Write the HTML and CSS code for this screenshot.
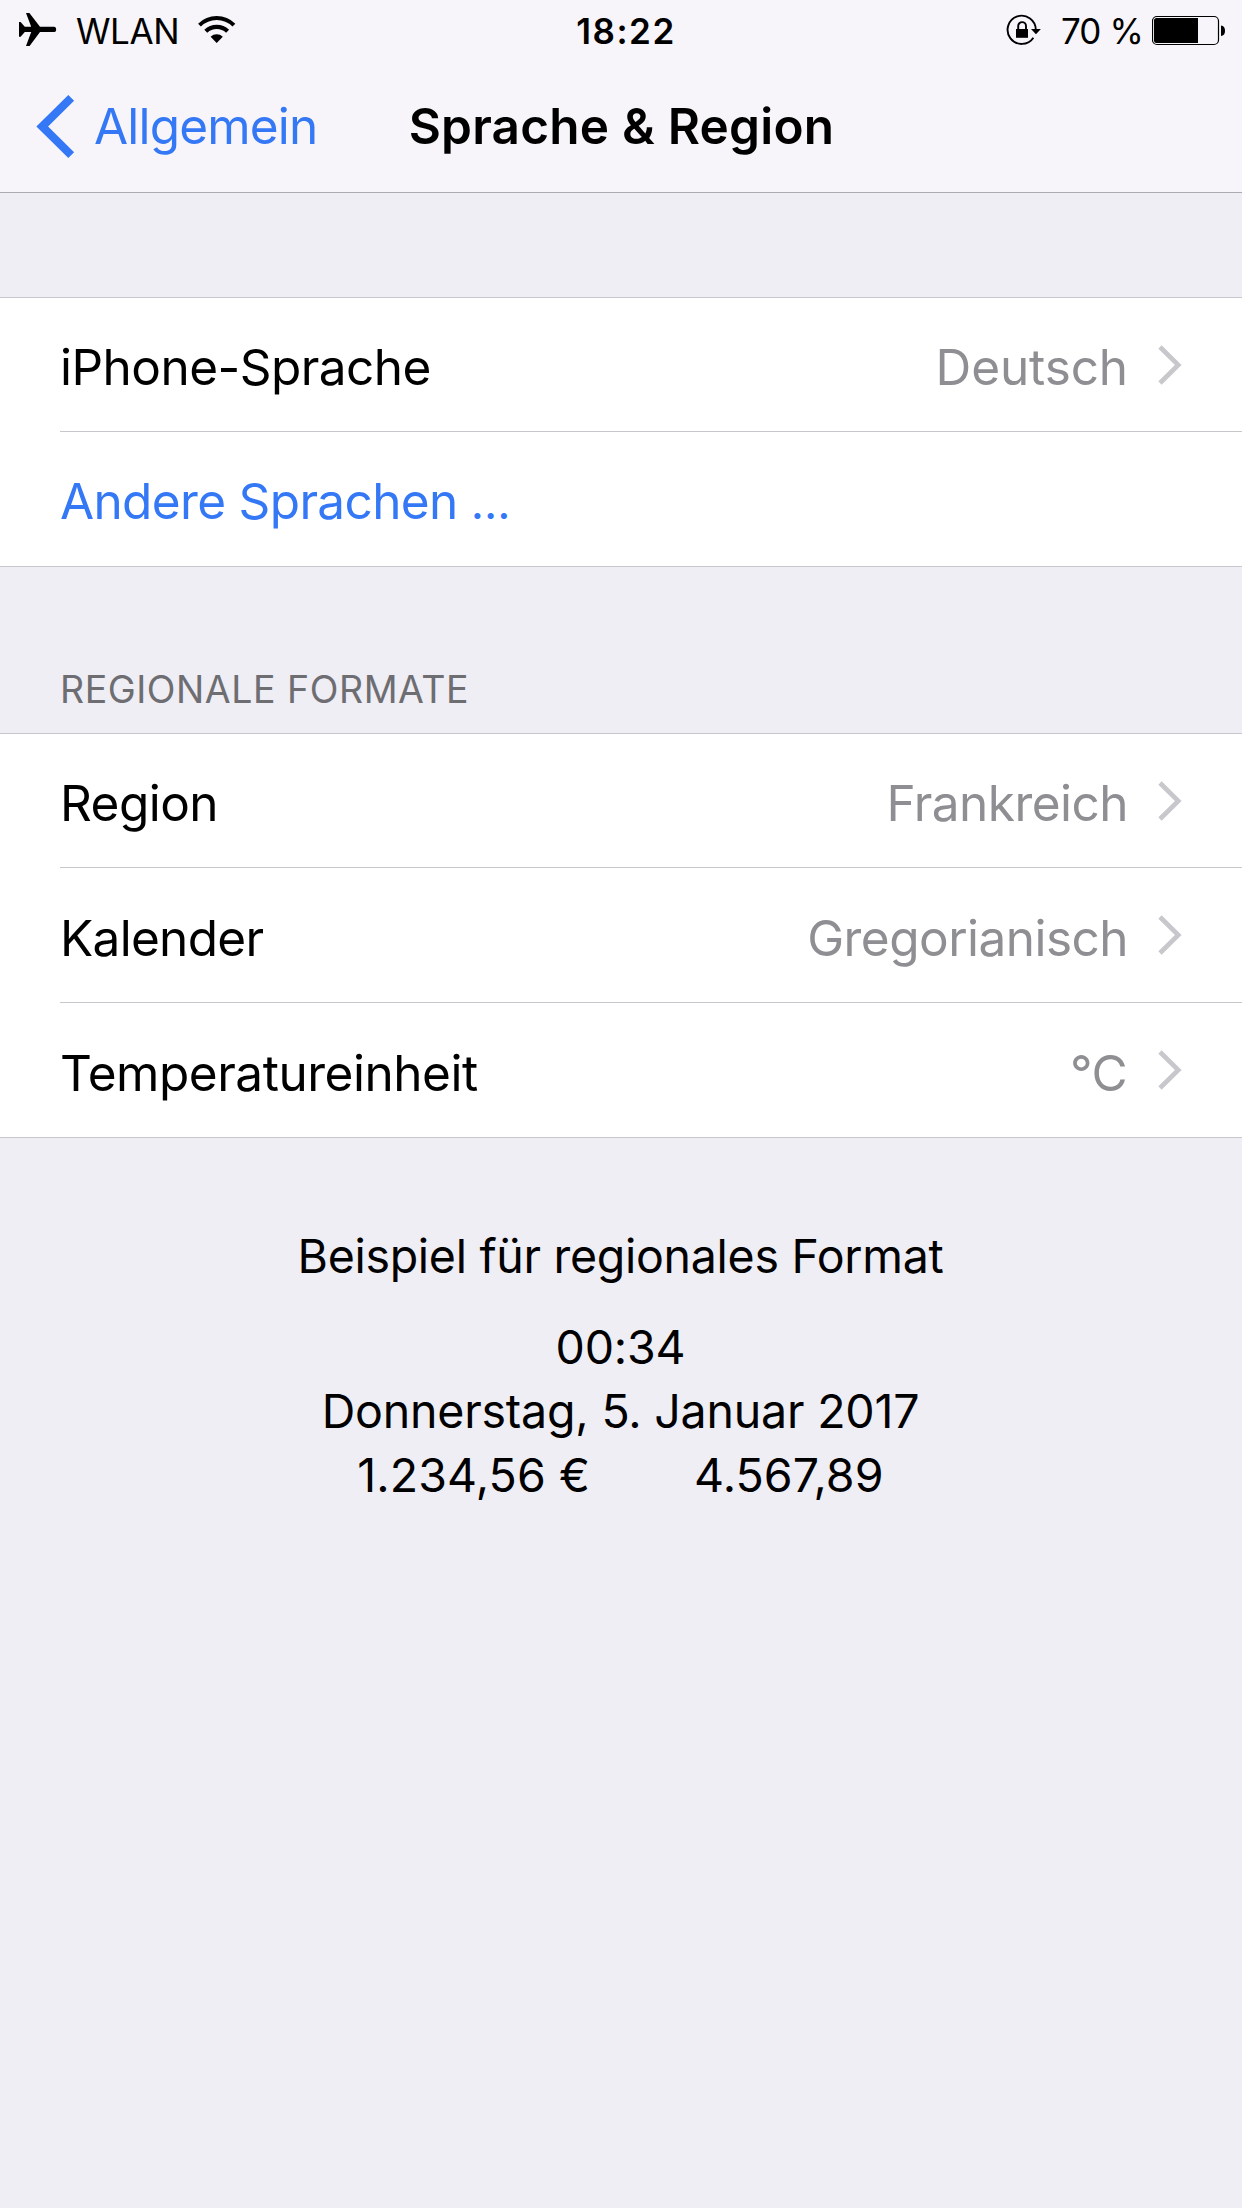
FILE: index.html
```
<!DOCTYPE html>
<html lang="de">
<head>
<meta charset="utf-8">
<title>Sprache &amp; Region</title>
<link rel="stylesheet" href="styles.css">
</head>
<body>
<svg class="sprite" aria-hidden="true">
  <symbol id="chevron" viewBox="0 0 24 40">
    <path d="M2 2 L20.3 20 L2 38" fill="none" stroke="currentColor" stroke-width="4.6"/>
  </symbol>
</svg>

<header class="header">
  <div class="status">
    <div class="status-left">
      <svg class="plane" viewBox="18 12 39 36" aria-hidden="true">
        <path d="M26 13h3.400L40 26.800h14.200q2 0 2 2.600t-2 2.600H40L29.600 46h-3.600l5.200-14H24.800l-4.200 4.700h-1.600V22h1.600l4.200 4.800h6.400z"/>
      </svg>
      <span class="carrier">WLAN</span>
      <svg class="wifi" viewBox="197 15 39 30" aria-hidden="true">
        <g fill="none" stroke="#000">
          <path d="M199.500 25.200a24.300 24.300 0 0 1 34.400 0" stroke-width="4"/>
          <path d="M205.800 31.200a15.800 15.800 0 0 1 21.800 0" stroke-width="4.300"/>
        </g>
        <path d="M216.700 43l-6.100-6.300a8.700 8.700 0 0 1 12.200 0z"/>
      </svg>
    </div>
    <time class="clock">18:22</time>
    <div class="status-right">
      <svg class="lock" viewBox="1006 14 36 32" aria-hidden="true">
        <path d="M1035.800 30A14.100 14.100 0 1 0 1033.400 37.700" fill="none" stroke="#000" stroke-width="1.900"/>
        <path d="M1031 29h9.900l-4.950 5.300z"/>
        <path d="M1016 29h12v8.800h-12z"/>
        <path d="M1018.200 30v-4a3.900 3.900 0 0 1 7.800 0v4" fill="none" stroke="#000" stroke-width="1.900"/>
      </svg>
      <span class="percent">70 %</span>
      <svg class="battery" viewBox="1152 15 74 31" aria-hidden="true">
        <rect x="1152.500" y="16.500" width="66" height="28" rx="4.500" fill="none" stroke="#000" stroke-width="1.200"/>
        <path d="M1198 18v25h-41.500q-2.500 0-2.500-2.500v-20q0-2.500 2.500-2.500z"/>
        <path d="M1221 25.500q4 .5 4 5.300t-4 5.300z"/>
      </svg>
    </div>
  </div>
  <nav class="nav">
    <a class="back">
      <svg class="back-icon" viewBox="37 94 39 65" aria-hidden="true">
        <path d="M72.200 97.800L43.200 126.500L72.200 155.200" fill="none" stroke="currentColor" stroke-width="8.200"/>
      </svg>
      <span class="back-label">Allgemein</span>
    </a>
    <h1 class="title">Sprache &amp; Region</h1>
  </nav>
</header>

<main>
  <section class="group group-language">
    <div class="row">
      <span class="label">iPhone-Sprache</span>
      <span class="value value-wide">Deutsch</span>
      <svg class="chevron"><use href="#chevron"/></svg>
    </div>
    <div class="row">
      <a class="label link">Andere Sprachen <span class="ellipsis">…</span></a>
    </div>
  </section>

  <h2 class="heading">REGIONALE FORMATE</h2>
  <section class="group">
    <div class="row">
      <span class="label">Region</span>
      <span class="value">Frankreich</span>
      <svg class="chevron"><use href="#chevron"/></svg>
    </div>
    <div class="row">
      <span class="label label-tight">Kalender</span>
      <span class="value">Gregorianisch</span>
      <svg class="chevron"><use href="#chevron"/></svg>
    </div>
    <div class="row">
      <span class="label label-long">Temperatureinheit</span>
      <span class="value value-unit">°C</span>
      <svg class="chevron"><use href="#chevron"/></svg>
    </div>
  </section>

  <section class="example">
    <p class="example-title">Beispiel für regionales Format</p>
    <p>00:34</p>
    <p>Donnerstag, 5. Januar 2017</p>
    <p class="numbers"><span>1.234,56 €</span><span>4.567,89</span></p>
  </section>
</main>
</body>
</html>
```
FILE: styles.css
```
* {
  box-sizing: border-box;
}

body {
  margin: 0;
  min-height: 2208px;
  background: #efeef4;
  color: #000;
  font: 400 49.5px/60px Inter, "Liberation Sans", sans-serif;
  letter-spacing: -0.53px;
  white-space: nowrap;
}

h1,
h2,
p {
  margin: 0;
  font: inherit;
}

svg {
  display: block;
  flex: none;
}

.sprite {
  display: none;
}

/* Header */

.header {
  height: 193px;
  background: #f7f5f9;
  border-bottom: 1px solid #acabb0;
}

.status,
.nav {
  display: grid;
  grid-template-columns: 1fr auto 1fr;
  align-items: center;
}

.status {
  height: 63px;
  font-size: 35px;
  line-height: 63px;
}

.status-left,
.status-right {
  display: flex;
  align-items: flex-start;
}

.status-left {
  padding-left: 18px;
}

.status-right {
  justify-content: flex-end;
  padding-right: 16px;
}

.plane {
  width: 39px;
  height: 36px;
  margin-top: 12px;
}

.carrier {
  margin: 0 18px 0 19px;
  letter-spacing: -0.4px;
}

.wifi {
  width: 39px;
  height: 30px;
  margin-top: 15px;
}

.clock {
  padding-left: 10px;
  font-weight: 600;
  letter-spacing: 1.5px;
}

.lock {
  width: 36px;
  height: 32px;
  margin-top: 14px;
}

.percent {
  margin: 0 9px 0 19px;
  letter-spacing: -0.89px;
}

.battery {
  width: 74px;
  height: 31px;
  margin-top: 15px;
}

.nav {
  height: 129px;
  padding-bottom: 3px;
}

.back {
  display: flex;
  align-items: center;
  gap: 19px;
  padding-left: 36px;
  color: #3478f6;
}

.back-icon {
  width: 39px;
  height: 65px;
}

.back-label {
  letter-spacing: -0.82px;
}

.title {
  padding-left: 1px;
  font-weight: 600;
  letter-spacing: 0.22px;
}

/* Grouped lists */

.group {
  padding-left: 60px;
  background: #fff;
  border: solid #c8c7cc;
  border-width: 1px 0;
}

.group-language {
  margin-top: 104px;
}

.row {
  display: flex;
  align-items: center;
  height: 135px;
  padding-right: 60px;
}

.row:first-child {
  height: 133px;
}

.row + .row {
  border-top: 1px solid #c8c7cc;
}

.label,
.value {
  padding-top: 5px;
}

.label-tight {
  letter-spacing: -0.7px;
}

.label-long {
  letter-spacing: -0.46px;
}

.link {
  color: #3478f6;
  letter-spacing: -0.65px;
}

.ellipsis {
  font-size: 46px;
}

.value {
  margin: 0 30px 0 auto;
  color: #8e8e93;
}

.value-wide {
  letter-spacing: -0.11px;
}

.value-unit {
  margin-right: 31px;
  letter-spacing: -0.6px;
}

.chevron {
  width: 24px;
  height: 40px;
  color: #c7c7cc;
}

.heading {
  display: flex;
  align-items: flex-end;
  height: 166px;
  padding: 0 0 20px 60px;
  color: #6d6d72;
  font-size: 37.5px;
  line-height: 46px;
  letter-spacing: 0.53px;
}

/* Format example */

.example {
  padding: 86px 1px 0 0;
  font-size: 46.5px;
  line-height: 64px;
  letter-spacing: -0.2px;
  text-align: center;
}

.example-title {
  margin-bottom: 27px;
  letter-spacing: -0.29px;
}

.numbers {
  display: flex;
  justify-content: center;
  gap: 104px;
  letter-spacing: 0.1px;
}
```
